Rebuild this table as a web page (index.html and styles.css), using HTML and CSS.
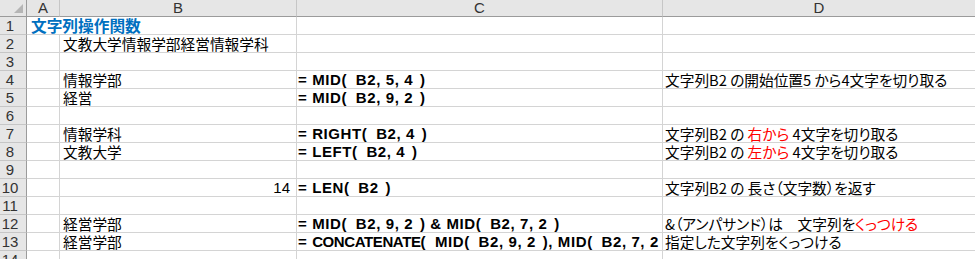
FILE: index.html
```html
<!DOCTYPE html>
<html lang="ja">
<head>
<meta charset="utf-8">
<link rel="stylesheet" href="styles.css">
</head>
<body>
<div class="sheet">
  <div class="corner"><span class="tri"></span></div>
  <div class="ch">A</div><div class="ch">B</div><div class="ch">C</div><div class="ch last">D</div>

  <div class="rh">1</div><div class="c title">文字列操作関数</div><div class="c"></div><div class="c d"></div>
  <div class="rh">2</div><div class="c"></div><div class="c">文教大学情報学部経営情報学科</div><div class="c"></div><div class="c d"></div>
  <div class="rh">3</div><div class="c"></div><div class="c"></div><div class="c"></div><div class="c d"></div>
  <div class="rh">4</div><div class="c"></div><div class="c">情報学部</div><div class="c f">= MID<span class="lp">(</span> B2, 5, 4 <span class="rp">)</span></div><div class="c d">文字列B2 の開始位置5 から4文字を切り取る</div>
  <div class="rh">5</div><div class="c"></div><div class="c">経営</div><div class="c f">= MID<span class="lp">(</span> B2, 9, 2 <span class="rp">)</span></div><div class="c d"></div>
  <div class="rh">6</div><div class="c"></div><div class="c"></div><div class="c"></div><div class="c d"></div>
  <div class="rh">7</div><div class="c"></div><div class="c">情報学科</div><div class="c f">= RIGHT<span class="lp">(</span> B2, 4 <span class="rp">)</span></div><div class="c d">文字列B2 の <span class="red">右から</span> 4文字を切り取る</div>
  <div class="rh">8</div><div class="c"></div><div class="c">文教大学</div><div class="c f">= LEFT<span class="lp">(</span> B2, 4 <span class="rp">)</span></div><div class="c d">文字列B2 の <span class="red">左から</span> 4文字を切り取る</div>
  <div class="rh">9</div><div class="c"></div><div class="c"></div><div class="c"></div><div class="c d"></div>
  <div class="rh">10</div><div class="c"></div><div class="c num">14</div><div class="c f">= LEN<span class="lp">(</span> B2 <span class="rp">)</span></div><div class="c d">文字列B2 の 長さ（文字数）を返す</div>
  <div class="rh">11</div><div class="c"></div><div class="c"></div><div class="c"></div><div class="c d"></div>
  <div class="rh">12</div><div class="c"></div><div class="c">経営学部</div><div class="c f">= MID<span class="lp">(</span> B2, 9, 2 <span class="rp">)</span> &amp; MID<span class="lp">(</span> B2, 7, 2 <span class="rp">)</span></div><div class="c d">&amp;（アンパサンド）は　文字列を<span class="red">くっつける</span></div>
  <div class="rh">13</div><div class="c"></div><div class="c">経営学部</div><div class="c f clip">= <span class="narrow">CONCATENATE</span><span class="lp">(</span> MID<span class="lp">(</span> B2, 9, 2 <span class="rp">)</span>, MID<span class="lp">(</span> B2, 7, 2 <span class="rp">)</span> <span class="rp">)</span></div><div class="c d">指定した文字列をくっつける</div>
  <div class="rh">14</div><div class="c"></div><div class="c"></div><div class="c"></div><div class="c d"></div>
</div>
</body>
</html>
```

FILE: styles.css
```css
html, body {
  margin: 0;
  padding: 0;
  background: #ffffff;
  overflow: hidden;
}

.sheet {
  display: grid;
  grid-template-columns: 27px 33px 237px 366px 1fr;
  grid-template-rows: 17px repeat(14, 18px);
  width: 975px;
  font-family: "Noto Sans CJK JP", "Liberation Sans", sans-serif;
  font-size: 14.7px;
  color: #000;
}

.corner {
  box-sizing: border-box;
  background: #e6e6e6;
  border-right: 1px solid #9b9b9b;
  border-bottom: 1px solid #9b9b9b;
  display: flex;
  justify-content: flex-end;
  align-items: flex-end;
  padding: 0 3px 3px 0;
}

.tri {
  width: 9px;
  height: 9px;
  background: #b5b5b5;
  clip-path: polygon(100% 0, 100% 100%, 0 100%);
}

.ch {
  box-sizing: border-box;
  background: #e6e6e6;
  border-right: 1px solid #c6c6c6;
  border-bottom: 1px solid #9b9b9b;
  text-align: center;
  font-family: "Liberation Sans", sans-serif;
  font-size: 15px;
  line-height: 16px;
  color: #333;
}

.ch.last {
  border-right: none;
}

.rh {
  box-sizing: border-box;
  background: #e6e6e6;
  border-right: 1px solid #9b9b9b;
  border-bottom: 1px solid #c6c6c6;
  text-align: center;
  padding-right: 6px;
  font-family: "Liberation Sans", sans-serif;
  font-size: 15px;
  line-height: 17px;
  color: #333;
}

.c {
  box-sizing: border-box;
  border-right: 1px solid #d4d4d4;
  border-bottom: 1px solid #d4d4d4;
  white-space: nowrap;
  line-height: 17px;
  padding: 0 3px;
  font-feature-settings: "palt";
}

.c.clip {
  overflow: hidden;
}

.c.d {
  border-right: none;
  padding-left: 2px;
}

.c.title {
  grid-column: span 2;
  padding-left: 4px;
  color: #0070c0;
  font-weight: 700;
  font-size: 15.7px;
}

.c.num {
  text-align: right;
  padding-right: 6px;
  font-family: "Liberation Sans", sans-serif;
  font-size: 15px;
}

.c.f {
  padding-left: 1px;
  font-family: "Liberation Sans", sans-serif;
  font-weight: 700;
  font-size: 15px;
  letter-spacing: 0.6px;
}

.narrow {
  letter-spacing: -0.4px;
}

.lp {
  margin-right: 4px;
}

.rp {
  margin-left: 2px;
}

.red {
  color: #ff0000;
}
```
